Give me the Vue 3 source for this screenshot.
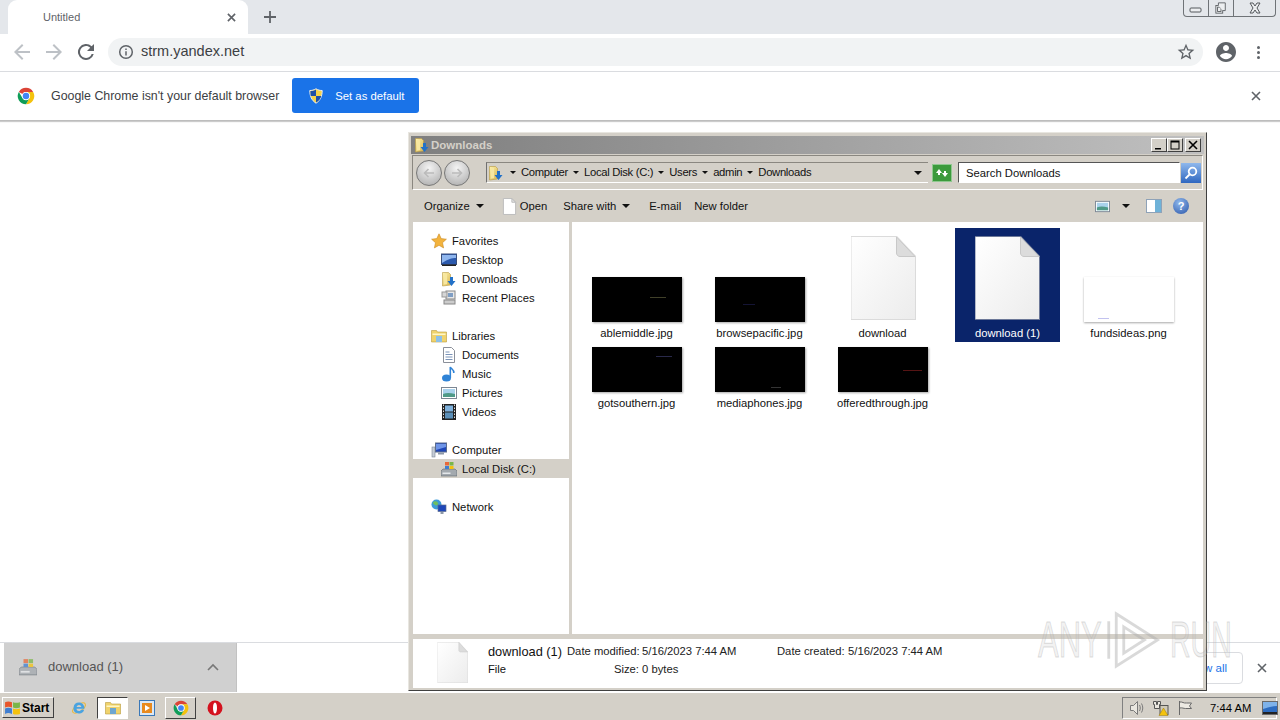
<template>
  <div class="screen">
    <svg class="defs" xmlns="http://www.w3.org/2000/svg">
      <defs>
        <linearGradient id="g-page" x1="0" y1="0" x2="1" y2="1">
          <stop offset="0" stop-color="#ffffff" />
          <stop offset="1" stop-color="#ececec" />
        </linearGradient>
        <linearGradient id="g-folder" x1="0" y1="0" x2="1" y2="1">
          <stop offset="0" stop-color="#fff3b0" />
          <stop offset="1" stop-color="#d9b64e" />
        </linearGradient>
      </defs>
      <symbol id="i-chrome" viewBox="0 0 24 24">
        <path fill="#db4437" d="M12 1a11 11 0 0 1 9.53 5.5H12a5.5 5.5 0 0 0-4.76 2.75L2.47 6.5A11 11 0 0 1 12 1z" />
        <path fill="#f4c20d" d="M21.53 6.5A11 11 0 0 1 12 23l4.76-8.25A5.5 5.5 0 0 0 12 6.5z" />
        <path fill="#0f9d58" d="M12 23A11 11 0 0 1 2.47 6.5l4.77 8.25a5.5 5.5 0 0 0 9.52 0z" />
        <circle cx="12" cy="12" r="5.5" fill="#fff" />
        <circle cx="12" cy="12" r="4.3" fill="#4285f4" />
      </symbol>
      <symbol id="i-shield" viewBox="0 0 16 16">
        <path fill="#f4d24a" stroke="#e8edf5" stroke-width="1" d="M8 .8c2 1.300 4 1.700 6.200 1.700 0 5.500-1.700 9.800-6.200 12.700C3.500 12.300 1.800 8 1.800 2.500 4 2.500 6 2.100 8 .8z" />
        <path fill="#1d4fa8" d="M8 1.600V8H2.700C2.500 6.500 2.400 5 2.400 3.100 4.400 3 6.200 2.700 8 1.600zM8 8h5.300c-.7 3-2.500 4.900-5.300 6.500z" />
      </symbol>
      <symbol id="i-folder-dl" viewBox="0 0 16 16">
        <path fill="url(#g-folder)" stroke="#b7993f" stroke-width=".6" d="M1.500 1.500h6l2 2v10.500l-8 1z" />
        <path fill="#f7e7a0" d="M3 3h3v10l-3 .4z" />
        <path fill="#2271c8" d="M9 6h3v4h2.500l-4 5-4-5H9z" />
      </symbol>
      <symbol id="i-page" viewBox="0 0 66 84" preserveAspectRatio="none">
        <path fill="#bdbdbd" d="M1 0h46l19 20v64H1z" opacity=".55" />
        <path fill="url(#g-page)" d="M1.500 1h45l18.500 19.500V83H1.500z" />
        <path fill="#dcdcdc" stroke="#c8c8c8" d="M46.500 1v16c0 2 1.500 3.500 3.500 3.500h15z" />
      </symbol>
      <symbol id="i-open" viewBox="0 0 16 18">
        <path fill="#fff" stroke="#bbb" d="M1.500 .5h9l4 4v13h-13z" />
        <path fill="#e3e3e3" stroke="#bbb" d="M10.500 .5v4h4z" />
      </symbol>
      <symbol id="i-star" viewBox="0 0 16 16">
        <path fill="#f3b33d" stroke="#c98a22" stroke-width=".6" d="M8 .8l2.200 4.800 5.200.6-3.900 3.500 1.100 5.200L8 12.300l-4.600 2.600 1.100-5.200L.6 6.200l5.200-.6z" />
      </symbol>
      <symbol id="i-desktop" viewBox="0 0 16 16">
        <rect x=".5" y="2" width="15" height="10.500" fill="#2b59ad" stroke="#3a4f7a" />
        <path fill="#8fb6ee" d="M1 3h14v3c-4 0-8 1-14 5z" />
        <rect x="1" y="12.500" width="14" height="1.500" fill="#222" />
      </symbol>
      <symbol id="i-recent" viewBox="0 0 16 16">
        <rect x="5" y="1" width="9" height="8" fill="#e8e8e8" stroke="#888" />
        <rect x="1" y="2" width="5" height="5" fill="#d6d6d6" stroke="#999" />
        <rect x="7" y="3" width="5" height="4" fill="#7f9ec4" />
        <rect x="3" y="10" width="11" height="4" fill="#ccc" stroke="#888" />
      </symbol>
      <symbol id="i-libraries" viewBox="0 0 16 16">
        <path fill="#f0d36c" stroke="#b89a3c" stroke-width=".6" d="M.5 2.500h5l1 1.500h9v10h-15z" />
        <path fill="#8cc0e8" d="M5 8h6v6H5z" />
        <path fill="#fff6c8" d="M1.500 5.500h13v1.500h-13z" />
      </symbol>
      <symbol id="i-documents" viewBox="0 0 16 16">
        <path fill="#fff" stroke="#8a8f99" d="M2.500 .5h8l3 3v12h-11z" />
        <path stroke="#7a93b8" d="M4.500 5h4M4.500 7.500h7M4.500 10h7M4.500 12.500h7" />
      </symbol>
      <symbol id="i-music" viewBox="0 0 16 16">
        <ellipse cx="5.500" cy="12" rx="4.500" ry="3.500" fill="#2f83d6" />
        <path fill="none" stroke="#2f83d6" stroke-width="1.600" d="M9.300 12V1c1 2 4 2.500 3.500 6" />
      </symbol>
      <symbol id="i-pictures" viewBox="0 0 16 16">
        <rect x=".5" y="2.500" width="15" height="11" fill="#fff" stroke="#7c8794" />
        <rect x="2" y="4" width="12" height="8" fill="#a9d2ec" />
        <path fill="#4f9a88" d="M2 9c3-1.500 7-1.500 12 0v3H2z" />
      </symbol>
      <symbol id="i-videos" viewBox="0 0 16 16">
        <rect x="1" y="0" width="14" height="16" fill="#222" />
        <rect x="4" y="1.500" width="8" height="6" fill="#7fb1dc" />
        <rect x="4" y="8.500" width="8" height="6" fill="#5b8fb8" />
        <path stroke="#ddd" stroke-dasharray="1.500 1.500" d="M2.500 .5v15M13.500 .5v15" />
      </symbol>
      <symbol id="i-computer" viewBox="0 0 16 16">
        <rect x="1" y="5" width="3" height="10" fill="#c5ccd6" stroke="#7c8794" stroke-width=".6" />
        <rect x="4.500" y="1" width="11" height="9" fill="#1e46b8" stroke="#5c6c8c" />
        <path fill="#6f95e8" d="M5 2h10v3L5 8z" />
        <rect x="7" y="10.500" width="6" height="2" fill="#8d98a8" />
      </symbol>
      <symbol id="i-disk" viewBox="0 0 16 16">
        <path fill="#a3a9ae" stroke="#5d646c" stroke-width=".6" d="M2 8h12l2 2v5H0v-5z" />
        <rect x="1.500" y="11.500" width="8" height="1.500" fill="#e4e7ea" />
        <rect x="4" y="1" width="4" height="3.500" fill="#e8693a" />
        <rect x="8.500" y="1" width="4" height="3.500" fill="#7ab648" />
        <rect x="4" y="5" width="4" height="3" fill="#3f7ed1" />
        <rect x="8.500" y="5" width="4" height="3" fill="#f4c20d" />
      </symbol>
      <symbol id="i-network" viewBox="0 0 16 16">
        <circle cx="5.500" cy="5.500" r="5" fill="#3d9bd8" />
        <path fill="#6fbf5f" d="M2 3c2-1 4-1 5 1s-2 3-3 2-2-1-2-3z" />
        <rect x="7" y="6" width="8" height="6.500" fill="#1e46b8" stroke="#5c6c8c" stroke-width=".7" />
        <rect x="9.500" y="13" width="3" height="2" fill="#8d98a8" />
      </symbol>
      <symbol id="i-ie" viewBox="0 0 16 16">
        <ellipse cx="8" cy="8" rx="7.500" ry="3.500" fill="none" stroke="#e8b83c" stroke-width="1.100" transform="rotate(-35 8 8)" />
        <path fill="#4aa3e0" d="M8 2.500a5.500 5.500 0 1 0 5.200 7.300h-3c-.5.900-1.200 1.300-2.200 1.300-1.500 0-2.400-1-2.500-2.300h7.900c.2-3.700-2.200-6.300-5.400-6.300zM5.600 7c.2-1.200 1.100-2 2.400-2s2.200.8 2.400 2z" />
      </symbol>
      <symbol id="i-explorer" viewBox="0 0 16 16">
        <path fill="#f0d36c" stroke="#b89a3c" stroke-width=".6" d="M.5 2.500h5l1 1.500h9v10h-15z" />
        <path fill="#6ea6cf" d="M5 8h6v6H5z" />
        <path fill="#fff6c8" d="M1.500 5.500h13v1.500h-13z" />
      </symbol>
      <symbol id="i-wmp" viewBox="0 0 16 16">
        <rect x=".5" y=".5" width="15" height="15" fill="#dbe8f5" stroke="#3a78b8" />
        <rect x="3" y="3" width="10" height="10" fill="#e98a1d" />
        <path fill="#fff" d="M6 5l5 3-5 3z" />
      </symbol>
      <symbol id="i-opera" viewBox="0 0 16 16">
        <circle cx="8" cy="8" r="7.500" fill="#d4121e" />
        <ellipse cx="8" cy="8" rx="2" ry="5.500" fill="#fff" />
      </symbol>
      <symbol id="i-speaker" viewBox="0 0 16 16">
        <path fill="#e9e6df" stroke="#7a7a7a" d="M1.500 5.500h3l4-4v13l-4-4h-3z" />
        <path fill="none" stroke="#7a7a7a" d="M10.500 5c1 2 1 4 0 6M12.500 3.500c1.700 3 1.700 6 0 9" />
      </symbol>
      <symbol id="i-netwarn" viewBox="0 0 16 16">
        <path fill="#e9e6df" stroke="#555" d="M.5 1.500h3v3h1v-3h3v3h-1v4h-5v-4h-1z" />
        <rect x="7" y="5.500" width="8" height="9" fill="#cfc9b8" stroke="#555" />
        <path fill="#f4c20d" stroke="#9a7a10" stroke-width=".5" d="M10.500 8l4.500 7.500H6z" />
      </symbol>
      <symbol id="i-flag" viewBox="0 0 16 16">
        <path fill="none" stroke="#6a6a6a" d="M2.500 1v14" />
        <path fill="#ece9e2" stroke="#6a6a6a" d="M2.500 2c3-.5 4 1.500 7 1h5l-2 3 2 2.500h-6c-2 0-3-1-6-.5z" />
      </symbol>
      <symbol id="i-traydesk" viewBox="0 0 16 14" preserveAspectRatio="none">
        <rect x=".5" y=".5" width="15" height="13" fill="#2d6cc0" stroke="#6a6a6a" />
        <path fill="#7fb3ea" d="M1 1h14v4c-4 0-8 1-14 3z" />
        <rect x="1" y="11" width="14" height="2" fill="#222" />
      </symbol>
      <symbol id="i-start" viewBox="0 0 16 16">
        <path fill="#e8552a" d="M1 3c2-1 4-1 6.500 0v5C5 7 3 7 1 8z" />
        <path fill="#7ab648" d="M8.500 3c2 .8 4 .8 6.500 0v5c-2.500.8-4.500.8-6.500 0z" />
        <path fill="#3f7ed1" d="M1 9c2-1 4-1 6.500 0v5C5 13 3 13 1 14z" />
        <path fill="#f4c20d" d="M8.500 9c2 .8 4 .8 6.500 0v5c-2.500.8-4.500.8-6.500 0z" />
      </symbol>
    </svg>

    <!-- chrome -->
    <div class="tabstrip">
      <div class="tab">
        <span class="tab-title">Untitled</span>
        <svg class="tab-x" viewBox="0 0 10 10"><path d="M1 1l8 8M9 1l-8 8" /></svg>
      </div>
      <svg class="newtab" viewBox="0 0 12 12"><path d="M6 0v12M0 6h12" /></svg>
      <div class="caption-btns">
        <span class="cap"><svg viewBox="0 0 14 10"><rect x="1" y="5" width="11" height="4" rx="1" /></svg></span>
        <span class="cap"><svg viewBox="0 0 14 14"><rect x="1" y="4" width="8" height="9" /><rect x="3" y="6" width="4" height="5" /><path d="M4 4V1h8v9H9" /></svg></span>
        <span class="cap cap-x"><svg viewBox="0 0 14 12"><path d="M2 1l3 0 2 3 2-3 3 0-3 5 3 5-3 0-2-3-2 3-3 0 3-5z" /></svg></span>
      </div>
    </div>
    <div class="toolbar">
      <svg class="nav-ico dim" viewBox="0 0 24 24"><path d="M20 11H7.830l5.590-5.590L12 4l-8 8 8 8 1.410-1.410L7.830 13H20v-2z" /></svg>
      <svg class="nav-ico dim" viewBox="0 0 24 24"><path d="M4 11h12.170l-5.590-5.590L12 4l8 8-8 8-1.410-1.410L16.170 13H4v-2z" /></svg>
      <svg class="nav-ico" viewBox="0 0 24 24"><path d="M17.650 6.350A8 8 0 1 0 19.730 14h-2.080A6 6 0 1 1 12 6c1.660 0 3.140.690 4.220 1.780L13 11h7V4l-2.350 2.350z" /></svg>
      <div class="omnibox">
        <svg class="info" viewBox="0 0 16 16"><circle cx="8" cy="8" r="6.300" /><path d="M8 7.200v4.300M8 4.500v1.500" /></svg>
        <span class="url">strm.yandex.net</span>
        <svg class="omni-star" viewBox="0 0 24 24"><path d="M22 9.240l-7.190-.620L12 2 9.190 8.630 2 9.240l5.460 4.730L5.820 21 12 17.270 18.180 21l-1.630-7.030L22 9.240zM12 15.400l-3.760 2.270 1-4.280-3.320-2.880 4.380-.380L12 6.100l1.710 4.040 4.380.380-3.320 2.880 1 4.280L12 15.400z" /></svg>
      </div>
      <svg class="avatar" viewBox="0 0 24 24"><path d="M12 2C6.480 2 2 6.480 2 12s4.480 10 10 10 10-4.480 10-10S17.520 2 12 2zm0 3c1.660 0 3 1.340 3 3s-1.340 3-3 3-3-1.340-3-3 1.340-3 3-3zm0 14.200c-2.500 0-4.710-1.280-6-3.220.030-1.990 4-3.080 6-3.080s5.970 1.090 6 3.080c-1.290 1.940-3.500 3.220-6 3.220z" /></svg>
      <div class="dots"><i></i><i></i><i></i></div>
    </div>
    <div class="infobar">
      <svg class="info-logo"><use href="#i-chrome" /></svg>
      <span class="info-text">Google Chrome isn't your default browser</span>
      <button class="default-btn">
        <svg class="shield"><use href="#i-shield" /></svg>
        <span>Set as default</span>
      </button>
      <svg class="info-x" viewBox="0 0 10 10"><path d="M1 1l8 8M9 1l-8 8" /></svg>
    </div>
    <div class="page"></div>
    <div class="downloads">
      <div class="dl-item">
        <svg class="dl-ico"><use href="#i-disk" /></svg>
        <span class="dl-name">download (1)</span>
        <svg class="dl-chev" viewBox="0 0 12 8"><path d="M1 7l5-5 5 5" /></svg>
      </div>
      <div class="show-all"><span>Show all</span></div>
      <svg class="dl-x" viewBox="0 0 10 10"><path d="M1 1l8 8M9 1l-8 8" /></svg>
    </div>

    <!-- taskbar -->
    <div class="taskbar">
      <div class="start">
        <svg class="start-ico"><use href="#i-start" /></svg>
        <span>Start</span>
      </div>
      <div class="task-icons">
        <span class="task"><svg><use href="#i-ie" /></svg></span>
        <span class="task pressed"><svg><use href="#i-explorer" /></svg></span>
        <span class="task"><svg><use href="#i-wmp" /></svg></span>
        <span class="task raised"><svg><use href="#i-chrome" /></svg></span>
        <span class="task"><svg><use href="#i-opera" /></svg></span>
      </div>
      <div class="tray">
        <svg class="tray-ico"><use href="#i-speaker" /></svg>
        <svg class="tray-ico"><use href="#i-netwarn" /></svg>
        <svg class="tray-ico"><use href="#i-flag" /></svg>
        <span class="clock">7:44 AM</span>
        <svg class="tray-desk"><use href="#i-traydesk" /></svg>
      </div>
    </div>

    <!-- explorer window -->
    <div class="window">
      <div class="titlebar">
        <svg class="title-ico"><use href="#i-folder-dl" /></svg>
        <span class="title-text">Downloads</span>
        <div class="win-btns">
          <span class="win-btn"><svg viewBox="0 0 12 10"><path d="M2 8h6v1.500H2z" /></svg></span>
          <span class="win-btn"><svg viewBox="0 0 12 10"><path d="M1.500 .5h9v9h-9zM2.500 2.500v6h7v-6z" fill-rule="evenodd" /></svg></span>
          <span class="win-btn close"><svg viewBox="0 0 12 10"><path d="M2 1l8 8M10 1l-8 8" /></svg></span>
        </div>
      </div>

      <div class="addressbar">
        <div class="round-btns">
          <span class="round"><svg viewBox="0 0 16 16"><path d="M13 8H4M7.500 4L3.500 8l4 4" /></svg></span>
          <span class="round"><svg viewBox="0 0 16 16"><path d="M3 8h9M8.500 4l4 4-4 4" /></svg></span>
        </div>
        <div class="crumbs">
          <svg class="crumb-ico"><use href="#i-folder-dl" /></svg>
          <template v-for="c in crumbs" :key="c">
            <i class="tri small"></i>
            <span class="crumb">{{ c }}</span>
          </template>
          <i class="tri crumb-drop"></i>
        </div>
        <span class="refresh">
          <svg viewBox="0 0 16 14"><path d="M2 7l3-4 3 4H6v2H4V7zM14 7l-3 4-3-4h2V5h2v2z" /></svg>
        </span>
        <div class="search">Search Downloads</div>
        <span class="search-btn">
          <svg viewBox="0 0 16 16"><circle cx="9.500" cy="6.500" r="3.800" /><path d="M6.500 9.500L2.500 13.500" /></svg>
        </span>
      </div>

      <div class="cmdbar">
        <span class="cmd organize">Organize <i class="tri"></i></span>
        <span class="cmd open"><svg class="open-ico"><use href="#i-open" /></svg>Open</span>
        <span class="cmd share">Share with <i class="tri"></i></span>
        <span class="cmd email">E-mail</span>
        <span class="cmd">New folder</span>
        <div class="cmd-right">
          <svg class="view-ico"><use href="#i-pictures" /></svg>
          <i class="tri view-tri"></i>
          <svg class="pane-ico" viewBox="0 0 16 14"><rect x=".5" y=".5" width="15" height="13" fill="#fff" stroke="#8ea2b8" /><rect x="9" y="1" width="6" height="12" fill="#6fb2d8" /></svg>
          <span class="help">?</span>
        </div>
      </div>

      <div class="body">
        <div class="navpane">
          <div v-for="n in nav" :key="n.label" class="nav-row" :class="{ child: n.child, sel: n.sel, gap: n.gap }">
            <svg class="nav-item-ico"><use :href="'#' + n.icon" /></svg>
            <span>{{ n.label }}</span>
          </div>
        </div>
        <div class="files">
          <div v-for="f in files" :key="f.name" class="file" :class="{ selected: f.selected }">
            <svg v-if="f.kind === 'doc'" class="bigdoc"><use href="#i-page" /></svg>
            <div v-else class="thumb" :class="{ white: f.kind === 'white' }">
              <i class="speck" :class="f.speck"></i>
            </div>
            <span class="file-name">{{ f.name }}</span>
          </div>
        </div>
      </div>

      <div class="details">
        <svg class="detail-doc"><use href="#i-page" /></svg>
        <div class="detail-grid">
          <span class="detail-name">download (1)</span>
          <span class="k">Date modified:</span><span class="v">5/16/2023 7:44 AM</span>
          <span class="k">Date created:</span><span class="v">5/16/2023 7:44 AM</span>
          <span class="detail-type">File</span>
          <span class="k size">Size:</span><span class="v">0 bytes</span>
        </div>
      </div>
    </div>

    <!-- watermark -->
    <div class="watermark">
      <span class="wm-any">ANY</span>
      <svg class="wm-play" viewBox="0 0 60 64"><path d="M10 4l44 28-44 28zM2 12v40M18 18l22 14-22 14z" /></svg>
      <span class="wm-run">RUN</span>
    </div>
  </div>
</template>

<script setup>
const crumbs = ['Computer', 'Local Disk (C:)', 'Users', 'admin', 'Downloads']

const nav = [
  { label: 'Favorites', icon: 'i-star' },
  { label: 'Desktop', icon: 'i-desktop', child: true },
  { label: 'Downloads', icon: 'i-folder-dl', child: true },
  { label: 'Recent Places', icon: 'i-recent', child: true },
  { label: 'Libraries', icon: 'i-libraries', gap: true },
  { label: 'Documents', icon: 'i-documents', child: true },
  { label: 'Music', icon: 'i-music', child: true },
  { label: 'Pictures', icon: 'i-pictures', child: true },
  { label: 'Videos', icon: 'i-videos', child: true },
  { label: 'Computer', icon: 'i-computer', gap: true },
  { label: 'Local Disk (C:)', icon: 'i-disk', child: true, sel: true },
  { label: 'Network', icon: 'i-network', gap: true },
]

const files = [
  { name: 'ablemiddle.jpg', kind: 'thumb', speck: 's1' },
  { name: 'browsepacific.jpg', kind: 'thumb', speck: 's2' },
  { name: 'download', kind: 'doc' },
  { name: 'download (1)', kind: 'doc', selected: true },
  { name: 'fundsideas.png', kind: 'white', speck: 's3' },
  { name: 'gotsouthern.jpg', kind: 'thumb', speck: 's4' },
  { name: 'mediaphones.jpg', kind: 'thumb', speck: 's5' },
  { name: 'offeredthrough.jpg', kind: 'thumb', speck: 's6' },
]
</script>

<style>
html, body { margin: 0; background: #fff; }
</style>

<style scoped>
.screen {
  position: relative;
  width: 1280px;
  height: 720px;
  overflow: hidden;
  display: flex;
  flex-direction: column;
  font-family: "Liberation Sans", sans-serif;
  font-size: 11.25px;
  color: #111;
  background: #fff;
}
.defs { position: absolute; width: 0; height: 0; }

/* chrome */
.tabstrip {
  height: 34px;
  flex: none;
  display: flex;
  align-items: flex-end;
  padding-left: 8px;
  background: #e4e7eb;
}
.tab {
  width: 240px;
  height: 34px;
  box-sizing: border-box;
  display: flex;
  align-items: center;
  justify-content: space-between;
  padding: 0 12px 0 35px;
  background: #fff;
  border-radius: 9px 9px 0 0;
}
.tab-title { font-size: 11px; color: #5f6368; margin-top: -1px; }
.tab-x { width: 9px; height: 9px; fill: none; stroke: #5f6368; stroke-width: 1.8; }
.newtab { width: 12px; height: 12px; margin: 0 0 11px 16px; fill: none; stroke: #5f6368; stroke-width: 1.8; }
.caption-btns {
  align-self: flex-start;
  margin: 0 4px 0 auto;
  display: flex;
  height: 16px;
  border: 1px solid #6f7377;
  border-top: none;
  border-radius: 0 0 4px 4px;
}
.cap { width: 24px; box-sizing: border-box; display: flex; align-items: center; justify-content: center; }
.cap + .cap { width: 25px; border-left: 1px solid #6f7377; }
.cap svg { width: 14px; height: 12px; fill: #eceef0; stroke: #55595d; stroke-width: 1; }
.cap + .cap.cap-x { width: 42px; }
.toolbar {
  height: 38px;
  flex: none;
  box-sizing: border-box;
  display: flex;
  align-items: center;
  padding: 0 10px 1px 10px;
  background: #fff;
  border-bottom: 1px solid #dadce0;
}
.nav-ico { width: 24px; height: 24px; margin-right: 8px; fill: #5f6368; }
.nav-ico.dim { fill: #bdc1c6; }
.omnibox {
  width: 1095px;
  height: 28px;
  margin-left: 2px;
  display: flex;
  align-items: center;
  padding: 0 7px 0 10px;
  box-sizing: border-box;
  border-radius: 14px;
  background: #f1f3f4;
}
.info { width: 16px; height: 16px; fill: none; stroke: #5f6368; stroke-width: 1.5; }
.url { margin: -2px 0 0 7px; font-size: 14.500px; color: #3c4043; }
.omni-star { width: 20px; height: 20px; margin-left: auto; fill: #5f6368; }
.avatar { width: 24px; height: 24px; margin-left: 11px; fill: #5f6368; }
.dots { margin-left: 19px; display: flex; flex-direction: column; gap: 2px; }
.dots i { width: 3px; height: 3px; border-radius: 50%; background: #5f6368; }

.infobar {
  height: 49px;
  flex: none;
  box-sizing: border-box;
  display: flex;
  align-items: center;
  padding: 0 17px;
  background: #fff;
  border-bottom: 1px solid #bdbdbd;
  box-shadow: 0 1px 1px rgba(0, 0, 0, .2);
}
.info-logo { width: 18px; height: 18px; flex: none; }
.info-text { margin-left: 16px; font-size: 12.400px; color: #3c4043; }
.default-btn {
  width: 127px;
  height: 35px;
  margin: -1px 0 0 13px;
  padding: 0 0 0 16px;
  display: flex;
  align-items: center;
  gap: 11px;
  border: none;
  border-radius: 3px;
  background: #1a73e8;
  color: #fff;
  font: inherit;
  font-size: 11.300px;
}
.shield { width: 16px; height: 16px; }
.info-x { width: 10px; height: 10px; margin-left: auto; margin-right: 2px; fill: none; stroke: #5f6368; stroke-width: 1.6; }
.page { flex: 1; }

.downloads {
  height: 50px;
  flex: none;
  box-sizing: border-box;
  display: flex;
  align-items: center;
  padding-left: 4px;
  border-top: 1px solid #dadce0;
  background: #fff;
}
.dl-item {
  width: 233px;
  height: 49px;
  box-sizing: border-box;
  display: flex;
  align-items: center;
  padding: 0 17px 2px 15px;
  background: #d0d0d0;
  border-right: 1px solid #c2c2c2;
}
.dl-ico { width: 18px; height: 18px; opacity: .75; }
.dl-name { margin-left: 11px; font-size: 13px; color: #555; }
.dl-chev { width: 12px; height: 8px; margin-left: auto; fill: none; stroke: #777; stroke-width: 1.6; }
.show-all {
  width: 93px;
  height: 32px;
  margin-left: auto;
  box-sizing: border-box;
  display: flex;
  align-items: center;
  justify-content: flex-end;
  padding-right: 15px;
  border: 1px solid #dadce0;
  border-radius: 4px;
  color: #1a73e8;
  font-size: 11.5px;
}
.dl-x { width: 10px; height: 10px; margin: 0 13px 0 14px; fill: none; stroke: #5f6368; stroke-width: 1.6; }

/* taskbar */
.taskbar {
  height: 28px;
  flex: none;
  box-sizing: border-box;
  display: flex;
  align-items: center;
  padding: 2px 3px 0 2px;
  border-top: 1px solid #fff;
  background: #d4d0c8;
}
.start {
  width: 52px;
  height: 21px;
  box-sizing: border-box;
  display: flex;
  align-items: center;
  gap: 1px;
  padding-left: 1px;
  border: 1px solid;
  border-color: #fff #404040 #404040 #fff;
  font-weight: 700;
  font-size: 12px;
  color: #000;
}
.start-ico { width: 17px; height: 17px; }
.task-icons { display: flex; align-items: center; margin-left: 9px; gap: 3px; }
.task { width: 31px; height: 22px; box-sizing: border-box; display: flex; align-items: center; justify-content: center; }
.task svg { width: 16px; height: 16px; }
.pressed { background: #fff; border: 1px solid; border-color: #404040 #fff #fff #404040; }
.raised { border: 1px solid; border-color: #fff #404040 #404040 #fff; }
.tray {
  margin-left: auto;
  width: 155px;
  height: 22px;
  box-sizing: border-box;
  display: flex;
  align-items: center;
  padding-left: 6px;
  gap: 8px;
  border: 1px solid;
  border-color: #808080 #fff #fff #808080;
}
.tray-ico { width: 16px; height: 16px; flex: none; }
.clock { margin-left: 9px; color: #000; white-space: nowrap; }
.tray-desk { width: 16px; height: 14px; margin-left: 3px; flex: none; }

/* explorer window */
.window {
  position: absolute;
  left: 408px;
  top: 132px;
  width: 799px;
  height: 559px;
  box-sizing: border-box;
  display: flex;
  flex-direction: column;
  padding: 3px 2px 2px 2px;
  background: #d4d0c8;
  border: 1px solid;
  border-color: #e8e6e0 #404040 #404040 #e8e6e0;
}
.titlebar {
  height: 18px;
  flex: none;
  display: flex;
  align-items: center;
  padding: 0 3px 0 3px;
  background: linear-gradient(90deg, #7f7f7f, #c0c0c0);
}
.title-ico { width: 16px; height: 16px; }
.title-text { margin-left: 1px; font-weight: 700; font-size: 11.5px; color: #d4d0c8; }
.win-btns { margin-left: auto; display: flex; }
.win-btn {
  width: 16px;
  height: 14px;
  box-sizing: border-box;
  display: flex;
  align-items: center;
  justify-content: center;
  background: #d4d0c8;
  border: 1px solid;
  border-color: #fff #404040 #404040 #fff;
}
.win-btn svg { width: 12px; height: 10px; fill: #000; }
.win-btn.close { margin-left: 2px; }
.win-btn.close svg { fill: none; stroke: #000; stroke-width: 1.6; }

.addressbar {
  height: 35px;
  flex: none;
  box-sizing: border-box;
  display: flex;
  align-items: center;
  margin: 1px 1px 0;
  padding: 0 0 0 3px;
  border: 1px solid #8a8780;
  border-right-color: #fff;
  border-bottom-color: #fff;
}
.addressbar > * { flex: none; }
.round-btns { display: flex; gap: 2px; }
.round {
  width: 26px;
  height: 26px;
  box-sizing: border-box;
  display: flex;
  align-items: center;
  justify-content: center;
  border: 1px solid #777;
  border-radius: 50%;
  background: radial-gradient(circle at 50% 30%, #f4f4f4, #a8a8a8);
}
.round svg { width: 16px; height: 16px; fill: none; stroke: #bbb; stroke-width: 1.6; }
.crumbs {
  width: 442px;
  height: 21px;
  margin-left: 16px;
  box-sizing: border-box;
  display: flex;
  align-items: center;
  padding: 0 6px 0 0;
  border-left: 1px solid #707070;
  border-top: 1px solid #8a8780;
  border-bottom: 1px solid #fff;
}
.crumb-ico { width: 16px; height: 16px; margin: 0 6px 0 1px; flex: none; }
.crumb { margin: -2px 5px 0 5px; color: #111; white-space: nowrap; letter-spacing: -.3px; }
.tri {
  display: inline-block;
  width: 0;
  height: 0;
  border: 4px solid transparent;
  border-top-color: #111;
  border-bottom: none;
  vertical-align: middle;
}
.tri.small { border-width: 3px 3px 0; }
.crumb-drop { margin-left: auto; }
.refresh {
  width: 20px;
  height: 18px;
  margin-left: 4px;
  display: flex;
  align-items: center;
  justify-content: center;
  background: #3c9a3c;
  border: 1px solid #8fc88f;
  box-sizing: border-box;
}
.refresh svg { width: 16px; height: 14px; fill: #fff; }
.search {
  width: 222px;
  height: 21px;
  margin-left: 6px;
  box-sizing: border-box;
  padding: 1px 0 0 7px;
  line-height: 18px;
  background: #fff;
  border: 1px solid;
  border-color: #555 #fff #fff #555;
}
.search-btn {
  width: 20px;
  height: 20px;
  margin-left: 1px;
  display: flex;
  align-items: center;
  justify-content: center;
  background: linear-gradient(#8fb8ec, #2f67c0);
}
.search-btn svg { width: 16px; height: 16px; fill: none; stroke: #fff; stroke-width: 1.8; }

.cmdbar {
  height: 32px;
  flex: none;
  box-sizing: border-box;
  display: flex;
  align-items: center;
  padding: 0 15px 0 13px;
}
.cmd { display: inline-flex; align-items: center; color: #111; white-space: nowrap; }
.cmd .tri { margin-left: 6px; }
.organize { margin-right: 18px; }
.open { margin-right: 16px; }
.share { margin-right: 19px; }
.email { margin-right: 13px; }
.open-ico { width: 15px; height: 17px; margin-right: 3px; }
.cmd-right { margin-left: auto; display: flex; align-items: center; }
.view-ico { width: 15px; height: 15px; }
.view-tri { margin: 0 16px 0 12px; }
.pane-ico { width: 16px; height: 14px; margin-right: 11px; }
.help {
  width: 16px;
  height: 16px;
  border-radius: 50%;
  display: flex;
  align-items: center;
  justify-content: center;
  background: radial-gradient(circle at 40% 30%, #8fb8ec, #2a55a8);
  color: #fff;
  font-weight: 700;
  font-size: 11px;
}

.body {
  flex: 1;
  min-height: 0;
  display: flex;
  margin: 0 1px 0 2px;
}
.navpane {
  width: 156px;
  flex: none;
  box-sizing: border-box;
  padding-top: 9px;
  background: #fff;
}
.nav-row {
  height: 19px;
  display: flex;
  align-items: center;
  padding-left: 18px;
  color: #111;
}
.nav-row.child { padding-left: 28px; }
.nav-row.gap { margin-top: 19px; }
.nav-row.sel { background: #d4d0c8; }
.nav-item-ico { width: 16px; height: 16px; margin-right: 5px; flex: none; }
.files {
  flex: 1;
  margin-left: 3px;
  padding: 6px 0 0 3px;
  background: #fff;
  display: grid;
  grid-template-columns: repeat(5, 123px);
  grid-template-rows: 114px 70px;
  align-content: start;
}
.file {
  display: flex;
  flex-direction: column;
  align-items: center;
  justify-content: flex-end;
  color: #111;
}
.file-name { height: 20px; line-height: 22px; white-space: nowrap; }
.file.selected { justify-self: center; width: 105px; margin-left: 4px; background: #0a246a; color: #fff; }
.bigdoc { width: 66px; height: 84px; margin-bottom: 2px; }
.file.selected .bigdoc { margin-right: 2px; }
.thumb {
  position: relative;
  width: 90px;
  height: 45px;
  background: #000;
  box-shadow: 1px 1px 2px rgba(0, 0, 0, .35);
}
.thumb.white { background: #fff; box-shadow: 0 1px 2px rgba(0, 0, 0, .35); }
.speck { position: absolute; height: 1px; opacity: .7; }
.s1 { left: 58px; top: 20px; width: 16px; background: #5b5b3a; }
.s2 { left: 28px; top: 27px; width: 12px; background: #1c1c4a; }
.s3 { left: 14px; top: 41px; width: 11px; background: #a8a8e8; }
.s4 { left: 64px; top: 9px; width: 16px; background: #3a3a6a; }
.s5 { left: 56px; top: 40px; width: 10px; background: #4a4a4a; }
.s6 { left: 65px; top: 23px; width: 19px; background: #7a1c1c; }

.details {
  height: 54px;
  flex: none;
  box-sizing: border-box;
  display: flex;
  margin: 0 1px 0 2px;
  padding-left: 24px;
  border-top: 5px solid #d4d0c8;
  background: #fff;
}
.detail-doc { width: 31px; height: 41px; margin-top: 3px; flex: none; }
.detail-grid {
  margin-left: 20px;
  display: grid;
  grid-template-columns: 79px 75px 135px 71px auto;
  grid-auto-rows: 18px;
  align-items: center;
  justify-content: start;
  padding-top: 3px;
}
.detail-name { font-size: 12.800px; white-space: nowrap; }
.detail-type { grid-column: 1; }
.k { white-space: nowrap; color: #222; }
.k.size { text-align: right; padding-right: 3px; }
.v { white-space: nowrap; color: #222; }

.watermark {
  position: absolute;
  left: 1038px;
  top: 610px;
  width: 194px;
  height: 60px;
  display: flex;
  align-items: center;
  justify-content: space-between;
  pointer-events: none;
  font-size: 50px;
  color: rgba(190, 190, 190, .2);
  -webkit-text-stroke: 1px rgba(170, 170, 170, .4);
}
.watermark span { display: inline-block; width: 62px; transform-origin: left center; }
.wm-any { transform: scaleX(.62); }
.wm-run { transform: scaleX(.57); }
.wm-play { width: 58px; height: 60px; flex: none; fill: none; stroke: rgba(170, 170, 170, .45); stroke-width: 3; }
</style>
